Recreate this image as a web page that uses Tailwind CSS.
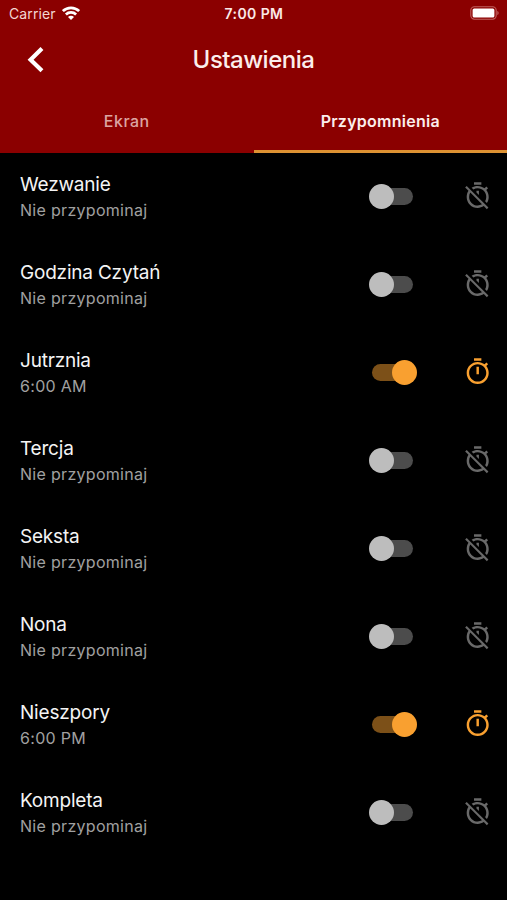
<!DOCTYPE html>
<html lang="pl">
<head>
    <meta charset="UTF-8">
    <meta name="viewport" content="width=device-width, initial-scale=1.0">
    <title>Ustawienia</title>
    <script src="https://cdn.jsdelivr.net/npm/@tailwindcss/browser@4"></script>
</head>
<body class="bg-black h-screen overflow-hidden text-white font-['Inter',sans-serif]">
    <!-- Icons -->
    <svg class="hidden">
        <symbol id="timer" viewBox="0 0 24 24">
            <path d="M15 1H9v2h6V1zm-4 13h2V8h-2v6zm8.03-6.61l1.42-1.42c-.43-.51-.9-.99-1.41-1.41l-1.42 1.42C16.07 4.74 14.12 4 12 4c-4.97 0-9 4.03-9 9s4.02 9 9 9 9-4.03 9-9c0-2.12-.74-4.07-1.97-5.61zM12 20c-3.87 0-7-3.13-7-7s3.13-7 7-7 7 3.13 7 7-3.13 7-7 7z"/>
        </symbol>
        <symbol id="timer-off" viewBox="0 0 24 24">
            <path d="M19.04 4.55l-1.42 1.42C16.07 4.74 14.12 4 12 4c-1.83 0-3.53.55-4.95 1.48l1.46 1.46C9.53 6.35 10.73 6 12 6c3.87 0 7 3.13 7 7 0 1.27-.35 2.47-.94 3.49l1.45 1.45C20.45 16.53 21 14.83 21 13c0-2.12-.74-4.07-1.97-5.61l1.42-1.42-1.41-1.42zM15 1H9v2h6V1zm-4 8.44l2 2V8h-2v1.44zM3.02 4L1.75 5.27 4.5 8.03C3.55 9.45 3 11.16 3 13c0 4.97 4.02 9 9 9 1.84 0 3.55-.55 4.98-1.5l2.5 2.5 1.27-1.27-7.71-7.71L3.02 4zM12 20c-3.87 0-7-3.13-7-7 0-1.28.35-2.48.95-3.52l9.56 9.56c-1.03.61-2.23.96-3.51.96z"/>
        </symbol>
    </svg>

    <header class="h-[153px] bg-[#8b0000] flex flex-col">
        <!-- Status bar -->
        <div class="h-7 grid grid-cols-3 items-center pl-[9px] pr-[8px] text-sm leading-none">
            <div class="flex items-center gap-[6px]">
                <span class="text-[#f3d6d3] tracking-[0.1px]">Carrier</span>
                <svg class="w-[18px] h-[14px] -mt-0.5" viewBox="0 0 18 14" fill="none" stroke="#fff" stroke-width="2.7">
                    <path d="M.9 5.1a11.6 11.6 0 0 1 16.2 0"/>
                    <path d="M3.9 8.5a7.3 7.3 0 0 1 10.2 0"/>
                    <path d="M9 13.9L6 10.9a4.2 4.2 0 0 1 6 0z" fill="#fff" stroke="none"/>
                </svg>
            </div>
            <span class="text-center font-semibold text-[#fbe9e7] tracking-[0.4px] whitespace-nowrap">7:00 PM</span>
            <svg class="justify-self-end w-[29px] h-[14px] -mt-0.5" viewBox="0 0 29 14">
                <rect x=".8" y=".8" width="25.4" height="12.4" rx="3.6" fill="none" stroke="#c0605e" stroke-width="1.1"/>
                <rect x="2.6" y="2.5" width="21.8" height="9" rx="1.6" fill="#fff"/>
                <path d="M27.3 5v4c1.8-.7 1.8-3.3 0-4z" fill="#c0605e"/>
            </svg>
        </div>

        <!-- Title bar -->
        <div class="h-16 grid grid-cols-[1fr_auto_1fr] items-center pl-7 pr-7">
            <svg class="w-[29.4px] h-[29.4px] overflow-visible" viewBox="0 0 24 24" fill="none" stroke="#fff" stroke-width="3.4">
                <path d="M11.4 2.9L2.1 12l9.3 9.1"/>
            </svg>
            <h1 class="text-2xl font-medium tracking-[-0.5px] text-[#fbeeec]">Ustawienia</h1>
        </div>

        <!-- Tabs -->
        <nav class="flex-1 grid grid-cols-2 text-center text-base">
            <a class="pt-[17px] font-medium text-[#dca5a2] tracking-[0.5px]">Ekran</a>
            <a class="pt-[17px] font-semibold text-[#fbeeec] tracking-[0.25px] border-b-3 border-[#dd9232]">Przypomnienia</a>
        </nav>
    </header>

    <!-- Reminders -->
    <ul id="reminders" class="-mt-px"></ul>

    <script>
        const reminders = [
            { name: 'Wezwanie' },
            { name: 'Godzina Czytań' },
            { name: 'Jutrznia', time: '6:00 AM' },
            { name: 'Tercja' },
            { name: 'Seksta' },
            { name: 'Nona' },
            { name: 'Nieszpory', time: '6:00 PM' },
            { name: 'Kompleta' },
        ];

        const switchOff = `
            <div class="w-12 h-[25px] flex items-center">
                <div class="w-[25px] h-[25px] shrink-0 rounded-full bg-[#bdbdbd] z-10"></div>
                <div class="w-10 h-[17px] -ml-[21px] rounded-full bg-[#4c4c4c]"></div>
            </div>`;
        const switchOn = `
            <div class="w-12 h-[25px] flex items-center">
                <div class="w-10 h-[17px] ml-[3px] rounded-full bg-[#7c5018]"></div>
                <div class="w-[25px] h-[25px] -ml-[20px] shrink-0 rounded-full bg-[#f9a030]"></div>
            </div>`;

        document.getElementById('reminders').innerHTML = reminders.map(r => `
            <li class="h-[88px] flex items-center pl-[20px] pr-[15px]">
                <div class="flex-1 pt-[3px]">
                    <div class="text-[19px] leading-6 tracking-[-0.2px] text-[#f4f4f4]">${r.name}</div>
                    <div class="text-base leading-[26px] tracking-[0.3px] text-[#a0a0a0]">${r.time || 'Nie przypominaj'}</div>
                </div>
                ${r.time ? switchOn : switchOff}
                <svg class="w-[29.4px] h-[29.4px] ml-[46px] ${r.time ? 'fill-[#f9a030]' : 'fill-[#696969]'}"><use href="#${r.time ? 'timer' : 'timer-off'}"/></svg>
            </li>`).join('');
    </script>
</body>
</html>
